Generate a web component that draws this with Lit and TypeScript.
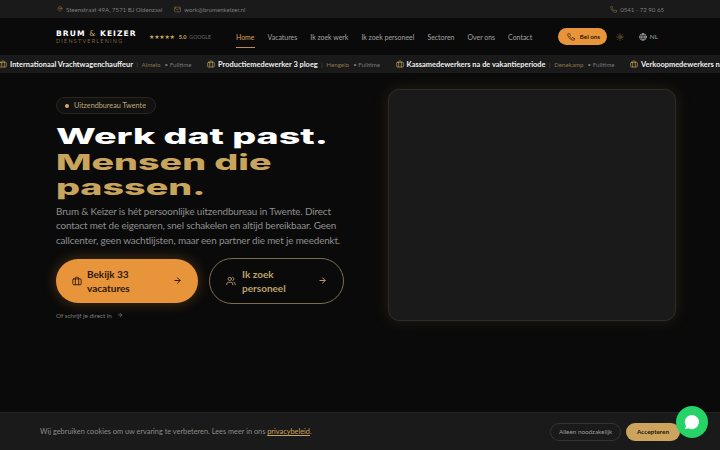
import { LitElement, html, css, svg } from "lit";
import { customElement } from "lit/decorators.js";

const ic = (body: unknown, size = 8, cls = "") => html`<svg class=${cls} width=${size} height=${size} viewBox="0 0 24 24" fill="none" stroke="currentColor" stroke-width="2" stroke-linecap="round" stroke-linejoin="round">${body}</svg>`;
const pin = svg`<path d="M20 10c0 6-8 12-8 12s-8-6-8-12a8 8 0 0 1 16 0Z"/><circle cx="12" cy="10" r="3"/>`;
const mail = svg`<rect x="2" y="4" width="20" height="16" rx="2"/><path d="m22 7-10 6L2 7"/>`;
const phone = svg`<path d="M22 16.9v3a2 2 0 0 1-2.2 2 19.8 19.8 0 0 1-8.6-3.1 19.5 19.5 0 0 1-6-6A19.8 19.8 0 0 1 2.1 4.2 2 2 0 0 1 4.1 2h3a2 2 0 0 1 2 1.7c.1 1 .4 1.9.7 2.8a2 2 0 0 1-.5 2.1L8.1 9.9a16 16 0 0 0 6 6l1.3-1.3a2 2 0 0 1 2.1-.4c.9.3 1.8.6 2.8.7a2 2 0 0 1 1.7 2Z"/>`;
const brief = svg`<rect x="2" y="7" width="20" height="14" rx="2"/><path d="M16 21V5a2 2 0 0 0-2-2h-4a2 2 0 0 0-2 2v16"/>`;
const sun = svg`<circle cx="12" cy="12" r="4"/><path d="M12 2v2M12 20v2M4.9 4.9l1.4 1.4M17.7 17.7l1.4 1.4M2 12h2M20 12h2M6.3 17.7l-1.4 1.4M19.1 4.9l-1.4 1.4"/>`;
const globe = svg`<circle cx="12" cy="12" r="10"/><path d="M2 12h20"/><path d="M12 2a15 15 0 0 1 4 10 15 15 0 0 1-4 10 15 15 0 0 1-4-10 15 15 0 0 1 4-10Z"/>`;
const arrow = svg`<path d="M5 12h14" stroke-width="2.6"/><path d="m12 5 7 7-7 7" stroke-width="2.6"/>`;
const users = svg`<path d="M16 21v-2a4 4 0 0 0-4-4H6a4 4 0 0 0-4 4v2"/><circle cx="9" cy="7" r="4"/><path d="M22 21v-2a4 4 0 0 0-3-3.9"/><path d="M16 3.1a4 4 0 0 1 0 7.8"/>`;

const jobs = [
  ["Internationaal Vrachtwagenchauffeur", "Almelo"],
  ["Productiemedewerker 3 ploeg", "Hengelo"],
  ["Kassamedewerkers na de vakantieperiode", "Denekamp"],
  ["Verkoopmedewerkers na de vakantieperiode", "Oldenzaal"],
];
const nav = ["Home", "Vacatures", "Ik zoek werk", "Ik zoek personeel", "Sectoren", "Over ons", "Contact"];

@customElement("app-root")
export class AppRoot extends LitElement {
  static styles = css`
    :host { display: block; position: relative; width: 720px; height: 450px; overflow: hidden; background: #0a0a0a; color: #fff; font-family: "Lato", "Noto Sans", sans-serif; }
    svg { display: block; flex: none; }
    .top { height: 18px; background: #1a1a1a; display: flex; align-items: center; padding: 0 56px; color: #7d7d7d; font-size: 6.1px; }
    .ti { display: flex; align-items: center; gap: 3px; margin-right: 12px; }
    .ti svg { color: #8c7448; }
    .ti:first-child svg { margin-left: 1px; }
    .push { margin-left: auto; margin-right: 0; }
    .head { height: 37px; background: #0a0a0a; display: flex; align-items: center; padding: 0 56px; }
    .logo { width: 93px; flex: none; }
    .logo b { display: block; font: 700 7.6px/9px "DejaVu Sans", sans-serif; letter-spacing: 1.05px; white-space: nowrap; }
    .logo b i { font-style: normal; color: #c9a45c; font-weight: 400; }
    .logo span { display: block; font-size: 5.4px; line-height: 7px; letter-spacing: 1.25px; color: #7a6640; }
    .rate { width: 87px; flex: none; display: flex; align-items: center; font-size: 5.2px; color: #6f6f6f; }
    .stars { color: #c9a45c; font-size: 6px; letter-spacing: -.25px; margin-right: 4px; font-family: "DejaVu Sans", sans-serif; }
    .rate b { color: #c9a45c; margin-right: 3px; font-weight: 700; font-size: 5.5px; }
    .nav { display: flex; gap: 13px; font-size: 6.95px; color: #a3a3a3; flex: none; }
    .nav a { position: relative; padding: 4px 0; white-space: nowrap; }
    .nav a.on { color: #d9a15a; }
    .nav a.on::after { content: ""; position: absolute; left: 0; right: 0; bottom: -3px; height: 1px; background: #c28a4c; }
    .right { margin-left: auto; margin-right: 6px; display: flex; align-items: center; }
    .bel { display: flex; align-items: center; gap: 5px; height: 17px; width: 49px; box-sizing: border-box; padding-left: 9px; border-radius: 9px; background: #e8943a; color: #2a1608; font-size: 6.2px; font-weight: 700; white-space: nowrap; }
    .sun { color: #8c7448; margin: 0 15px 0 9px; }
    .lang { display: flex; align-items: center; gap: 3px; font-size: 6.4px; color: #a3a3a3; }
    .lang svg { color: #c4c4c4; }
    .tick { height: 18px; background: #1a1a1a; display: flex; align-items: center; gap: 15.5px; white-space: nowrap; font-size: 6.2px; color: #777; overflow: hidden; }
    .job { display: flex; align-items: center; flex: none; }
    .job:first-child { margin-left: -1px; }
    .job svg { color: #c9a45c; margin-right: 3px; }
    .job b { color: #f0f0f0; font-size: 7.45px; font-weight: 700; }
    .job i { font-style: normal; color: #555; margin: 0 3.5px; }
    .job em { font-style: normal; color: #8c7448; margin-right: 4px; }
    .hero { display: flex; padding: 16px 44px 0 56px; height: 300px; box-sizing: border-box; background: #0a0a0a; }
    .left { width: 332px; flex: none; }
    .pill { display: inline-flex; align-items: center; gap: 5px; height: 17px; box-sizing: border-box; padding: 0 9px 0 8px; border: 1px solid #2b261c; border-radius: 9px; font-size: 7.25px; color: #bfa878; background: #111; margin-top: 8px; }
    .pill::before { content: ""; width: 4px; height: 4px; border-radius: 50%; background: #d9ad5e; }
    h1 { margin: 10px 0 0; font: 800 21.5px/25.5px "Inter", sans-serif; transform: scaleX(1.75); transform-origin: 0 50%; white-space: nowrap; }
    h1 span { display: block; color: #c9a45c; }
    .lead { margin: 3px 0 0; font-size: 9.9px; letter-spacing: -.14px; line-height: 14.7px; color: #8f8f8f; white-space: nowrap; }
    .cta { display: flex; align-items: center; margin-top: 10px; gap: 11px; }
    .btn { display: flex; align-items: center; box-sizing: border-box; border-radius: 24px; font-size: 10px; font-weight: 700; line-height: 14px; }
    .b1 { width: 142px; height: 44px; background: #e8943a; color: #2a1608; padding: 0 16px; box-shadow: 0 0 14px rgba(232,148,58,.3); }
    .b2 { width: 135px; height: 46px; border: 1.5px solid #7d6d50; color: #bda26c; padding: 0 16px; }
    .btn span { margin: 0 auto 0 5px; }
    .b2 span { margin-left: 6px; }
    .b2 svg:last-child { color: #b0a07c; }
    .sub { display: flex; align-items: center; gap: 5px; margin-top: 8px; font-size: 6.3px; color: #7d7d7d; }
    .card { width: 289px; height: 232px; box-sizing: border-box; border: 1px solid #302c22; border-radius: 11px; background: #1a1a1a; box-shadow: 0 0 16px rgba(201,164,92,.14); }
    .cookie { position: absolute; left: 0; right: 0; bottom: 0; height: 38px; background: #1a1a1a; border-top: 1px solid #222; box-sizing: border-box; display: flex; align-items: center; padding: 0 40px; font-size: 7.35px; color: #8a8a8a; }
    .cookie u { color: #c9a45c; }
    .cookie .acts { margin-left: auto; display: flex; gap: 5px; font-size: 6.3px; }
    .acts div { height: 18px; display: flex; align-items: center; justify-content: center; border-radius: 9px; box-sizing: border-box; }
    .a1 { width: 71px; border: 1px solid #333; color: #9a9a9a; }
    .a2 { width: 54px; background: #cda45e; color: #1a1206; font-weight: 700; }
    .wa { position: absolute; left: 676px; top: 406px; width: 32px; height: 32px; border-radius: 50%; background: #25d366; display: flex; align-items: center; justify-content: center; }
  `;

  render() {
    return html`
      <div class="top">
        <div class="ti">${ic(pin, 6)}<span>Steenstraat 49A, 7571 BJ Oldenzaal</span></div>
        <div class="ti">${ic(mail, 7)}<span>work@brumenkeizer.nl</span></div>
        <div class="ti push">${ic(phone, 7)}<span>0541 - 72 90 65</span></div>
      </div>
      <div class="head">
        <div class="logo"><b>BRUM <i>&amp;</i> KEIZER</b><span>DIENSTVERLENING</span></div>
        <div class="rate"><span class="stars">★★★★★</span><b>5.0</b>GOOGLE</div>
        <div class="nav">${nav.map((n, i) => html`<a class=${i === 0 ? "on" : ""}>${n}</a>`)}</div>
        <div class="right">
          <div class="bel">${ic(phone, 8)}Bel ons</div>
          <div class="sun">${ic(sun, 8)}</div>
          <div class="lang">${ic(globe, 8)}NL</div>
        </div>
      </div>
      <div class="tick">
        ${jobs.map(([t, c]) => html`<div class="job">${ic(brief, 8)}<b>${t}</b><i>|</i><em>${c}</em><span>• Fulltime</span></div>`)}
      </div>
      <div class="hero">
        <div class="left">
          <div class="pill">Uitzendbureau Twente</div>
          <h1>Werk dat past.<span>Mensen die</span><span>passen.</span></h1>
          <p class="lead">Brum &amp; Keizer is hét persoonlijke uitzendbureau in Twente. Direct<br>contact met de eigenaren, snel schakelen en altijd bereikbaar. Geen<br>callcenter, geen wachtlijsten, maar een partner die met je meedenkt.</p>
          <div class="cta">
            <div class="btn b1">${ic(brief, 10)}<span>Bekijk 33<br>vacatures</span>${ic(arrow, 9)}</div>
            <div class="btn b2">${ic(users, 10)}<span>Ik zoek<br>personeel</span>${ic(arrow, 9)}</div>
          </div>
          <div class="sub">Of schrijf je direct in ${ic(arrow, 6)}</div>
        </div>
        <div class="card"></div>
      </div>
      <div class="cookie">
        <span>Wij gebruiken cookies om uw ervaring te verbeteren. Lees meer in ons <u>privacybeleid</u>.</span>
        <div class="acts"><div class="a1">Alleen noodzakelijk</div><div class="a2">Accepteren</div></div>
      </div>
      <div class="wa"><svg width="18" height="18" viewBox="0 0 24 24"><path fill="#fff" d="M12 2.5a9.5 9.5 0 0 0-8 14.6L2.7 21.5l4.5-1.2A9.5 9.5 0 1 0 12 2.5Z"/></svg></div>
    `;
  }
}
